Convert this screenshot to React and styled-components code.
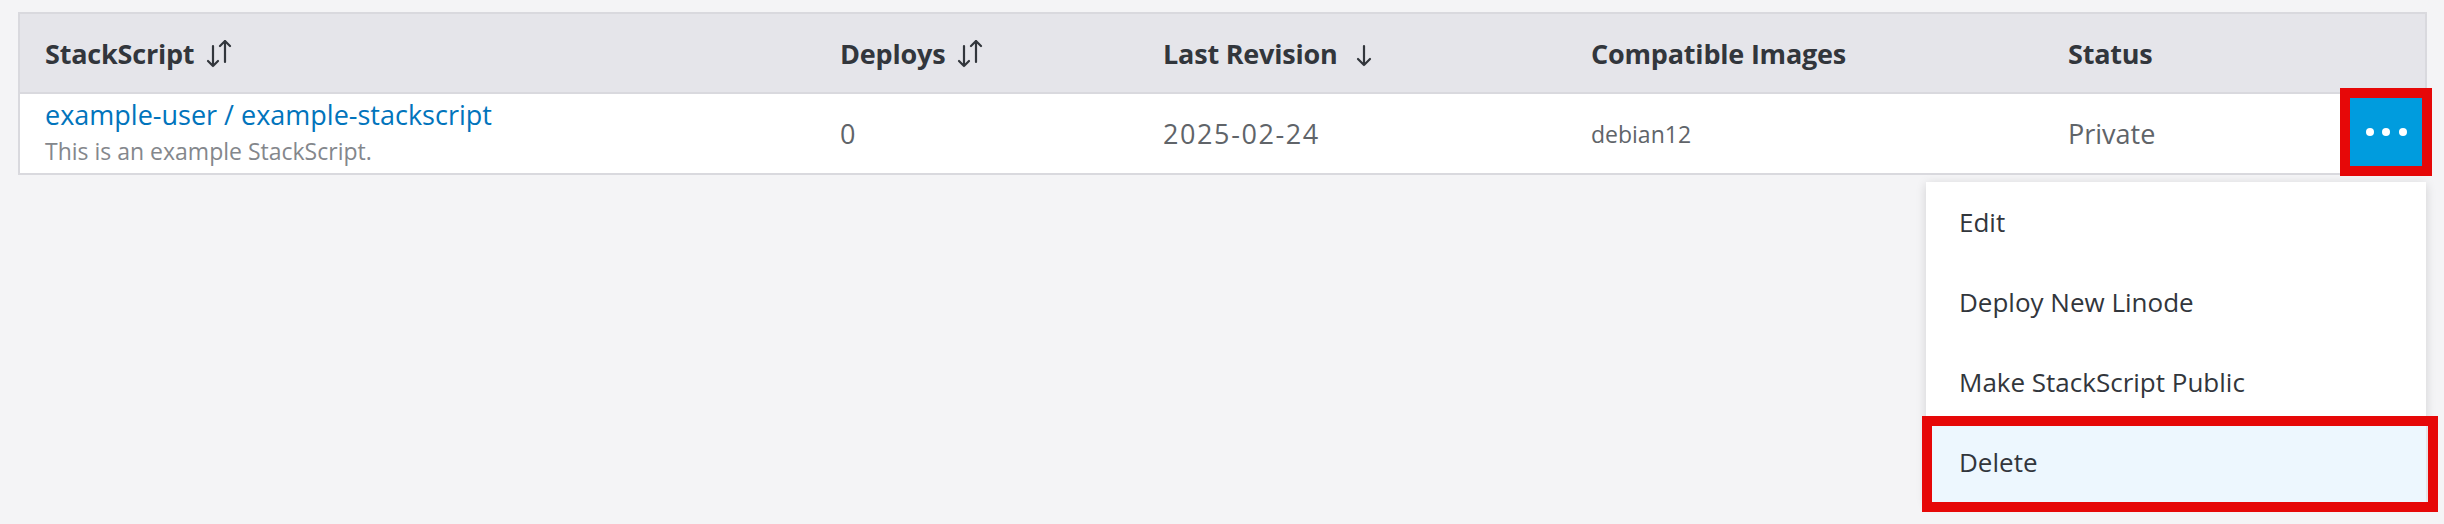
import React from "react";
import styled, { createGlobalStyle } from "styled-components";

const GlobalStyle = createGlobalStyle`
  html, body {
    margin: 0;
    padding: 0;
    background: #f4f4f6;
  }
  body {
    font-family: "Open Sans", "Noto Sans", sans-serif;
    -webkit-font-smoothing: antialiased;
  }
  * { box-sizing: border-box; }
`;

const Page = styled.div`
  min-height: 524px;
  padding: 12px 17px 0 18px;
  background: #f4f4f6;
`;

const Table = styled.div`
  border: 2px solid #d9d9de;
  background: #ffffff;
`;

const cols = "795px 323px 428px 477px 298px 1fr";

const HeaderRow = styled.div`
  display: grid;
  grid-template-columns: ${cols};
  height: 80px;
  background: #e5e5ea;
  border-bottom: 2px solid #d9d9de;
`;

const HeadCell = styled.div`
  display: flex;
  align-items: center;
  padding-left: 25px;
  font-size: 27px;
  font-weight: 700;
  color: #32363c;
  letter-spacing: -0.2px;
`;

const SortIcon = styled.svg`
  margin-left: ${(p) => p.$gap || 12}px;
  margin-top: 2px;
  flex: none;
`;

const BodyRow = styled.div`
  display: grid;
  grid-template-columns: ${cols};
  height: 79px;
  background: #ffffff;
`;

const Cell = styled.div`
  display: flex;
  align-items: center;
  padding-left: 25px;
  font-size: ${(p) => p.$size || 27}px;
  letter-spacing: ${(p) => p.$track || 0}px;
  color: #606469;
`;

const NameCell = styled.div`
  display: flex;
  flex-direction: column;
  padding: 2px 0 0 25px;
`;

const Link = styled.a`
  font-size: 27px;
  line-height: 37px;
  color: #0174bc;
  text-decoration: none;
  cursor: pointer;
`;

const Desc = styled.div`
  margin-top: 3px;
  font-size: 23px;
  line-height: 31px;
  color: #84878c;
`;

const ActionCell = styled.div`
  position: relative;
  display: flex;
  align-items: center;
  justify-content: flex-end;
  padding-right: 3px;
`;

const MenuButton = styled.button`
  width: 72px;
  height: 68px;
  margin-top: -3px;
  border: none;
  padding: 0;
  background: #009cde;
  outline: 10px solid #e60808;
  display: flex;
  align-items: center;
  justify-content: center;
  gap: 8.5px;
  cursor: pointer;
`;

const Dot = styled.span`
  width: 8px;
  height: 8px;
  border-radius: 50%;
  background: #ffffff;
`;

const Menu = styled.ul`
  position: absolute;
  top: 88px;
  right: -1px;
  width: 500px;
  margin: 0;
  padding: 0;
  list-style: none;
  background: #ffffff;
  box-shadow: 0 2px 10px rgba(0, 0, 0, 0.14);
  z-index: 5;
`;

const MenuItem = styled.li`
  position: relative;
  height: 80px;
  display: flex;
  align-items: center;
  padding-left: 33px;
  font-size: 26px;
  color: #32363c;
  background: ${(p) => (p.$active ? "#edf7fe" : "#ffffff")};

  ${(p) =>
    p.$active &&
    `
    &::after {
      content: "";
      position: absolute;
      top: -6px;
      left: -4px;
      right: -12px;
      bottom: -10px;
      border: 10px solid #e60808;
      pointer-events: none;
    }
  `}
`;

const BothArrows = () => (
  <SortIcon width="26" height="28" viewBox="0 0 26 28" fill="none" stroke="#32363c" strokeWidth="2.2" strokeLinecap="round" strokeLinejoin="round">
    <path d="M7 6 V26 M2 21 L7 26 L12 21" />
    <path d="M19 1 V22 M14 6 L19 1 L24 6" />
  </SortIcon>
);

const DownArrow = () => (
  <SortIcon $gap={17} width="18" height="28" viewBox="0 0 18 28" fill="none" stroke="#32363c" strokeWidth="2.2" strokeLinecap="round" strokeLinejoin="round">
    <path d="M9 6 V25 M3 19 L9 25 L15 19" />
  </SortIcon>
);

const menuItems = ["Edit", "Deploy New Linode", "Make StackScript Public", "Delete"];

export default function App() {
  return (
    <>
      <GlobalStyle />
      <Page>
        <Table>
          <HeaderRow>
            <HeadCell>
              StackScript
              <BothArrows />
            </HeadCell>
            <HeadCell>
              Deploys
              <BothArrows />
            </HeadCell>
            <HeadCell>
              Last Revision
              <DownArrow />
            </HeadCell>
            <HeadCell>Compatible Images</HeadCell>
            <HeadCell>Status</HeadCell>
            <HeadCell />
          </HeaderRow>
          <BodyRow>
            <NameCell>
              <Link>example-user / example-stackscript</Link>
              <Desc>This is an example StackScript.</Desc>
            </NameCell>
            <Cell>0</Cell>
            <Cell $track={1.6}>2025-02-24</Cell>
            <Cell $size={23}>debian12</Cell>
            <Cell>Private</Cell>
            <ActionCell>
              <MenuButton aria-label="Action menu">
                <Dot />
                <Dot />
                <Dot />
              </MenuButton>
              <Menu>
                {menuItems.map((m) => (
                  <MenuItem key={m} $active={m === "Delete"}>
                    {m}
                  </MenuItem>
                ))}
              </Menu>
            </ActionCell>
          </BodyRow>
        </Table>
      </Page>
    </>
  );
}
